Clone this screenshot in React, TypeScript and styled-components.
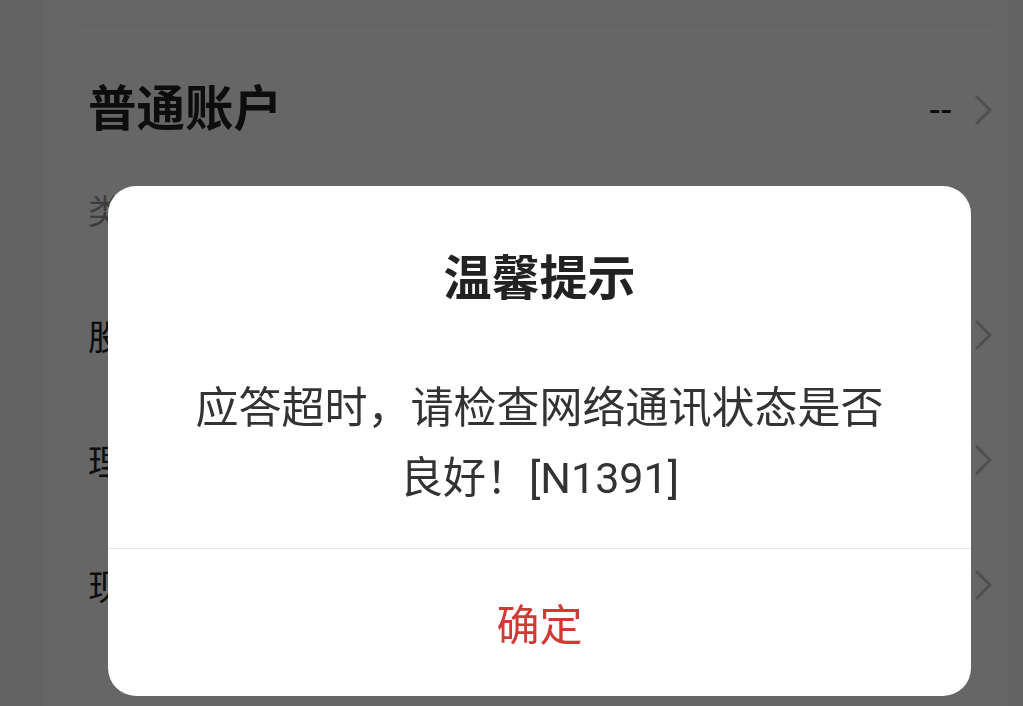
import React from 'react';
import styled, { createGlobalStyle } from 'styled-components';

const GlobalStyle = createGlobalStyle`
  html, body {
    margin: 0;
    padding: 0;
    overflow: hidden;
    background: #f6f6f6;
    font-family: Roboto, "Noto Sans CJK SC", sans-serif;
  }
  * {
    box-sizing: border-box;
  }
`;

const Page = styled.div`
  min-height: 706px;
  padding: 0 15px 0 42px;
  background: #f6f6f6;
`;

const Card = styled.section`
  min-height: 706px;
  background: #ffffff;
  padding: 24px 15px 0 46px;
`;

const TopRule = styled.div`
  height: 2px;
  margin-left: -8px;
  background: #f7f7f7;
`;

const AccountHeader = styled.div`
  display: flex;
  align-items: center;
  justify-content: space-between;
  height: 84px;
  margin-top: 42px;

  h2 {
    margin: 0;
    font-size: 48.5px;
    font-weight: 700;
    color: #222;
    line-height: 1;
  }
`;

const Trailing = styled.div`
  display: flex;
  align-items: center;
  gap: 21px;
  font-size: 34px;
  font-weight: 500;
  color: #222;
`;

const Subtitle = styled.div`
  margin-top: 42px;
  font-size: 34px;
  line-height: 36px;
  color: #999;
`;

const RowList = styled.div`
  margin-top: 42px;
`;

const Row = styled.div`
  display: flex;
  align-items: center;
  justify-content: space-between;
  height: 125px;
  font-size: 35px;
  color: #222;
`;

const Chevron: React.FC = () => (
  <svg width="20" height="32" viewBox="0 0 20 32" fill="none">
    <polyline points="3,2 17,16 3,30" stroke="#c6c6c6" strokeWidth="3" strokeLinejoin="miter" />
  </svg>
);

const Overlay = styled.div`
  position: fixed;
  inset: 0;
  background: rgba(0, 0, 0, 0.6);
  display: flex;
  align-items: flex-start;
  padding: 186px 0 0 108px;
`;

const Dialog = styled.div`
  width: 863px;
  height: 510px;
  background: #ffffff;
  border-radius: 28px;
  overflow: hidden;
  display: flex;
  flex-direction: column;
`;

const DialogBody = styled.div`
  padding: 60px 80px 35px;
  text-align: center;
  border-bottom: 1px solid #e8e8e8;
`;

const DialogTitle = styled.h3`
  margin: 0;
  font-size: 48px;
  line-height: 66px;
  font-weight: 700;
  color: #222;
`;

const DialogMessage = styled.p`
  margin: 61px 0 0;
  font-size: 43px;
  line-height: 70px;
  color: #333;
`;

const ConfirmButton = styled.button`
  flex: 1;
  border: none;
  background: transparent;
  font-family: inherit;
  font-size: 43px;
  color: #cf3a34;
  padding: 0 0 2px;
  cursor: pointer;
`;

export default function App() {
  const rows = ['股票账户', '理财账户', '现金账户'];

  return (
    <>
      <GlobalStyle />
      <Page>
        <Card>
          <TopRule />
          <AccountHeader>
            <h2>普通账户</h2>
            <Trailing>
              <span>--</span>
              <Chevron />
            </Trailing>
          </AccountHeader>
          <Subtitle>类型</Subtitle>
          <RowList>
            {rows.map((label) => (
              <Row key={label}>
                <span>{label}</span>
                <Chevron />
              </Row>
            ))}
          </RowList>
        </Card>
      </Page>
      <Overlay>
        <Dialog>
          <DialogBody>
            <DialogTitle>温馨提示</DialogTitle>
            <DialogMessage>应答超时，请检查网络通讯状态是否良好！[N1391]</DialogMessage>
          </DialogBody>
          <ConfirmButton>确定</ConfirmButton>
        </Dialog>
      </Overlay>
    </>
  );
}
